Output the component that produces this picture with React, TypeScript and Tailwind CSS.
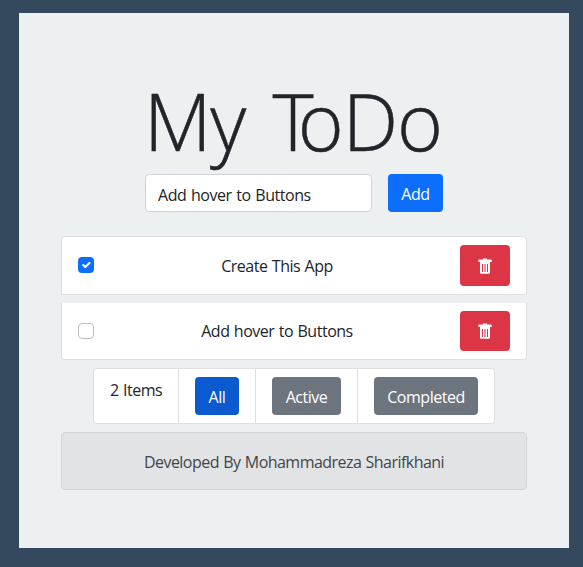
import React, { useState } from "react";

type Todo = { id: number; title: string; done: boolean };

const initialTodos: Todo[] = [
  { id: 1, title: "Create This App", done: true },
  { id: 2, title: "Add hover to Buttons", done: false },
];

function Checkbox({ checked, onClick }: { checked: boolean; onClick: () => void }) {
  return (
    <button
      role="checkbox"
      aria-checked={checked}
      onClick={onClick}
      className={
        checked
          ? "mb-0.5 flex size-4 shrink-0 items-center justify-center rounded bg-[#0d6efd]"
          : "size-4 shrink-0 rounded border border-[#bfbfbf] bg-white"
      }
    >
      {checked && (
        <svg viewBox="0 0 20 20" className="size-3.5" fill="none" stroke="#fff" strokeWidth="3" strokeLinecap="round" strokeLinejoin="round">
          <path d="M6 10l3 3l6-6" />
        </svg>
      )}
    </button>
  );
}

function TrashIcon() {
  return (
    <svg width="16" height="16" viewBox="0 0 16 16">
      <path fill="#fff" d="M6 .6h4v1h4a.7.7 0 0 1 .7.7V4H1.3V2.300a.7.7 0 0 1 .7-.7h4z" />
      <path fill="#fff" d="M3 4h10v10.500a1.300 1.300 0 0 1-1.300 1.300H4.300A1.300 1.300 0 0 1 3 14.500z" />
      <path fill="#dc3545" d="M5 6h1v8H5zM10 6h1v8h-1z" />
      <path fill="#dc3545" fillOpacity=".55" d="M7 6h2v8H7z" />
    </svg>
  );
}

function FilterCell({ children, first }: { children: React.ReactNode; first?: boolean }) {
  return (
    <li className={first ? "px-4 py-2" : "border-l border-[#dfdfdf] px-4 py-2"}>{children}</li>
  );
}

export default function App() {
  const [todos, setTodos] = useState(initialTodos);
  const [text, setText] = useState("Add hover to Buttons");
  const toggle = (id: number) =>
    setTodos(todos.map((t) => (t.id === id ? { ...t, done: !t.done } : t)));

  return (
    <div className="h-[567px] bg-[#34495e] pt-[13px] pl-[19px] font-['Open_Sans','Noto_Sans',sans-serif] text-base leading-6 tracking-[-0.48px] text-[#212529] [word-spacing:0.7px]">
      <main className="flex h-[535px] w-[550px] flex-col bg-[#ecf0f1] px-[42px] pt-[60px]">
        <h1 className="mb-[5px] h-24 pr-[2px] text-center text-[78.4px] leading-[96px] font-light tracking-[-1.5px] whitespace-nowrap [-webkit-text-stroke:0.5px_#212529] [word-spacing:9px]">
          My <span className="tracking-[-16px]">T</span>
          <span className="tracking-[-1px]">oDo</span>
        </h1>
        <div className="flex justify-center gap-4">
          <input
            value={text}
            onChange={(e) => setText(e.target.value)}
            className="h-[38px] w-[227px] rounded border border-[#ced4da] bg-white px-3 pt-[3px] tracking-[-0.45px] outline-none [word-spacing:0.9px]"
          />
          <button className="h-[38px] w-[55px] rounded bg-[#0d6efd] pt-0.5 text-white">Add</button>
        </div>

        <ul className="mt-6 flex flex-col gap-2">
          {todos.map((t, i) => (
            <li
              key={t.id}
              className={
                i === 0
                  ? "flex h-[59px] items-center justify-between rounded-t border border-[#dfdfdf] bg-white px-4"
                  : "flex h-[57px] items-center justify-between rounded-b border border-t-0 border-[#dfdfdf] bg-white px-4"
              }
            >
              <Checkbox checked={t.done} onClick={() => toggle(t.id)} />
              <span>{t.title}</span>
              <button
                aria-label="Delete"
                onClick={() => setTodos(todos.filter((x) => x.id !== t.id))}
                className={
                  i === 0
                    ? "flex h-[41px] w-[50px] items-center justify-center rounded bg-[#dc3545] pt-px text-white"
                    : "flex h-10 w-[50px] items-center justify-center rounded bg-[#dc3545] text-white"
                }
              >
                <TrashIcon />
              </button>
            </li>
          ))}
        </ul>

        <ul className="mt-2 flex h-14 w-[402px] self-center rounded border border-[#dfdfdf] bg-white">
          <FilterCell first>
            <span className="block w-[52px] pt-px whitespace-nowrap">{todos.length} Items</span>
          </FilterCell>
          <FilterCell>
            <button className="h-[38px] w-11 rounded bg-[#0b5acf] pt-0.5 text-white">All</button>
          </FilterCell>
          <FilterCell>
            <button className="h-[38px] w-[69px] rounded bg-[#6c757d] pt-0.5 text-white">Active</button>
          </FilterCell>
          <FilterCell>
            <button className="h-[38px] w-[104px] rounded bg-[#6c757d] pt-0.5 text-white">Completed</button>
          </FilterCell>
        </ul>

        <footer className="mt-2 flex h-[58px] items-center justify-center rounded border border-[#d3d6d8] bg-[#e2e3e5] pt-0.5 tracking-[-0.54px] text-[#41464b]">
          Developed By Mohammadreza Sharifkhani
        </footer>
      </main>
    </div>
  );
}
